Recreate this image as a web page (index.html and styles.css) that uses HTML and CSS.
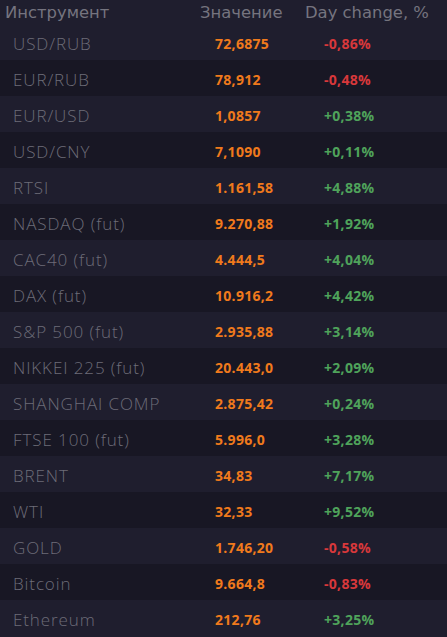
FILE: index.html
```html
<!DOCTYPE html>
<html lang="ru">
<head>
<meta charset="utf-8">
<title>Котировки</title>
<link rel="stylesheet" href="styles.css">
</head>
<body>
<div class="quotes">
  <div class="head">
    <span class="h-name">Инструмент</span>
    <span class="h-val">Значение</span>
    <span class="h-chg">Day change, %</span>
  </div>
  <div class="row"><span class="name">USD/RUB</span><span class="val">72,6875</span><span class="chg neg">-0,86%</span></div>
  <div class="row"><span class="name">EUR/RUB</span><span class="val">78,912</span><span class="chg neg">-0,48%</span></div>
  <div class="row"><span class="name">EUR/USD</span><span class="val">1,0857</span><span class="chg pos">+0,38%</span></div>
  <div class="row"><span class="name">USD/CNY</span><span class="val">7,1090</span><span class="chg pos">+0,11%</span></div>
  <div class="row"><span class="name">RTSI</span><span class="val">1.161,58</span><span class="chg pos">+4,88%</span></div>
  <div class="row"><span class="name">NASDAQ (fut)</span><span class="val">9.270,88</span><span class="chg pos">+1,92%</span></div>
  <div class="row"><span class="name">CAC40 (fut)</span><span class="val">4.444,5</span><span class="chg pos">+4,04%</span></div>
  <div class="row"><span class="name">DAX (fut)</span><span class="val">10.916,2</span><span class="chg pos">+4,42%</span></div>
  <div class="row"><span class="name">S&amp;P 500 (fut)</span><span class="val">2.935,88</span><span class="chg pos">+3,14%</span></div>
  <div class="row"><span class="name">NIKKEI 225 (fut)</span><span class="val">20.443,0</span><span class="chg pos">+2,09%</span></div>
  <div class="row"><span class="name">SHANGHAI COMP</span><span class="val">2.875,42</span><span class="chg pos">+0,24%</span></div>
  <div class="row"><span class="name">FTSE 100 (fut)</span><span class="val">5.996,0</span><span class="chg pos">+3,28%</span></div>
  <div class="row"><span class="name">BRENT</span><span class="val">34,83</span><span class="chg pos">+7,17%</span></div>
  <div class="row"><span class="name">WTI</span><span class="val">32,33</span><span class="chg pos">+9,52%</span></div>
  <div class="row"><span class="name">GOLD</span><span class="val">1.746,20</span><span class="chg neg">-0,58%</span></div>
  <div class="row"><span class="name">Bitcoin</span><span class="val">9.664,8</span><span class="chg neg">-0,83%</span></div>
  <div class="row"><span class="name">Ethereum</span><span class="val">212,76</span><span class="chg pos">+3,25%</span></div>
</div>
</body>
</html>
```
FILE: styles.css
```css
html, body {
  margin: 0;
  padding: 0;
  background: #1f1e2e;
}
.quotes {
  width: 447px;
  display: flex;
  flex-direction: column;
}
.head {
  height: 24px;
  display: grid;
  grid-template-columns: 200px 105px 1fr;
  align-items: center;
  font-family: "DejaVu Sans", sans-serif;
  font-size: 16.4px;
  color: #75747f;
  background: #1f1e2e;
}
.h-name { padding-left: 5px; }
.row {
  height: 36px;
  box-sizing: border-box;
  padding-top: 3px;
  display: grid;
  grid-template-columns: 215px 109px 1fr;
  align-items: center;
  background: #1f1e2e;
}
.row:nth-child(odd) {
  background: #181724;
}
.name {
  padding-left: 13px;
  font-family: "Open Sans", sans-serif;
  font-weight: 300;
  font-size: 17px;
  letter-spacing: 0.9px;
  color: #6d6c78;
}
.val, .chg {
  font-family: "Open Sans", sans-serif;
  font-weight: 700;
  font-size: 14px;
  letter-spacing: 0.3px;
}
.val { color: #f07a1c; }
.neg { color: #d8383b; }
.pos { color: #4fa35b; }
```
